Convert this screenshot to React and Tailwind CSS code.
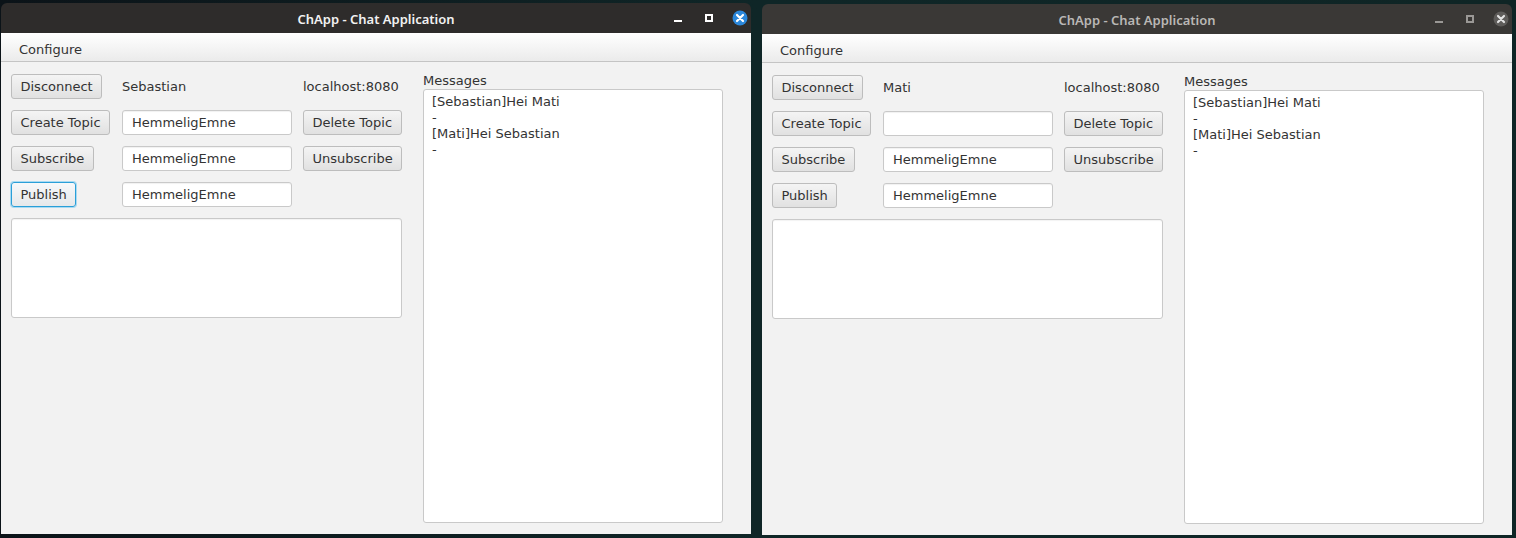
import React from "react";

const FONT = { fontFamily: '"DejaVu Sans", "Liberation Sans", sans-serif' };

function Btn({ children, focused }) {
  return (
    <div
      className={
        "h-[25px] inline-flex items-center px-[8.5px] pt-[1px] rounded-[3px] border text-[13px] text-[#333] whitespace-nowrap bg-gradient-to-b " +
        (focused
          ? "border-[#2a9fd8] from-[#f6f8fa] to-[#e6e8ea] shadow-[0_0_0_1px_#a9daf2]"
          : "border-[#bdbdbd] from-[#f4f4f4] to-[#e1e1e1]")
      }
    >
      {children}
    </div>
  );
}

function Field({ value }) {
  return (
    <div className="h-[25px] w-[170px] flex items-center pl-[9px] pt-[1px] bg-white border border-[#c9c9c9] rounded-[3px] shadow-[inset_0_1px_1px_rgba(0,0,0,0.06)] text-[13px] text-[#333]">
      {value}
    </div>
  );
}

function Controls({ active }) {
  const fg = active ? "#ffffff" : "#9a9896";
  return (
    <svg width="80" height="30" viewBox="0 0 80 30">
      <rect x="6" y="17" width="8" height="2" fill={fg} />
      <rect x="38" y="12" width="6" height="6" fill="none" stroke={fg} strokeWidth="2" />
      <circle cx="72" cy="15" r="7.5" fill={active ? "#2b87da" : "#5e5c5a"} />
      <path
        d="M69 12 L75 18 M75 12 L69 18"
        stroke={active ? "#ffffff" : "#e2e2e2"}
        strokeWidth="2.2"
        strokeLinecap="round"
      />
    </svg>
  );
}

function Window({ active, name, createValue, pos }) {
  return (
    <div
      className={"absolute w-[750px] h-[531px] flex flex-col rounded-t-[6px] overflow-hidden " + pos}
      style={FONT}
    >
      <div
        className={
          "h-[30px] grid grid-cols-[1fr_auto_1fr] items-center " +
          (active ? "bg-[#2e2c2b]" : "bg-[#3a3836]")
        }
      >
        <div />
        <div
          className={
            "text-[13px] font-semibold pt-[3px] " + (active ? "text-[#f2f2f2]" : "text-[#b9b7b5]")
          }
          style={{ fontFamily: '"Noto Sans", "DejaVu Sans", sans-serif' }}
        >
          ChApp - Chat Application
        </div>
        <div className="flex justify-end pr-[3px]">
          <Controls active={active} />
        </div>
      </div>
      <div className="h-[29px] flex items-start pl-[18px] pt-[9px] leading-[16px] bg-gradient-to-b from-[#ffffff] to-[#ebebeb] border-b border-[#c4c4c4] text-[13px] text-[#333]">
        Configure
      </div>
      <div className="flex-1 bg-[#f2f2f2] flex pl-[10px] pt-[11px] pb-[11px]">
        <div className="mt-[1px] w-[391px] grid grid-cols-[111px_181px_99px] gap-y-[11px] content-start text-[13px] text-[#333]">
          <div className="flex"><Btn>Disconnect</Btn></div>
          <div className="h-[25px] flex items-center pt-[1px]">{name}</div>
          <div className="h-[25px] flex items-center pt-[1px]">localhost:8080</div>

          <div className="flex"><Btn>Create Topic</Btn></div>
          <Field value={createValue} />
          <div className="flex"><Btn>Delete Topic</Btn></div>

          <div className="flex"><Btn>Subscribe</Btn></div>
          <Field value="HemmeligEmne" />
          <div className="flex"><Btn>Unsubscribe</Btn></div>

          <div className="flex"><Btn focused={active}>Publish</Btn></div>
          <Field value="HemmeligEmne" />
          <div />

          <div className="col-span-3 h-[100px] bg-white border border-[#c9c9c9] rounded-[3px] shadow-[inset_0_1px_1px_rgba(0,0,0,0.05)]" />
        </div>
        <div className="ml-[21px] w-[300px] flex flex-col">
          <div className="h-[16px] leading-[16px] text-[13px] text-[#333]">Messages</div>
          <div className="flex-1 bg-white border border-[#c9c9c9] rounded-[3px] pl-[8px] pt-[4px] text-[13px] leading-[16px] text-[#333]">
            <div>[Sebastian]Hei Mati</div>
            <div>-</div>
            <div>[Mati]Hei Sebastian</div>
            <div>-</div>
          </div>
        </div>
      </div>
    </div>
  );
}

export default function App() {
  return (
    <div className="relative w-[1516px] h-[538px] overflow-hidden bg-gradient-to-r from-[#0b1318] via-[#0f2627] to-[#0f2525]">
      <Window active name="Sebastian" createValue="HemmeligEmne" pos="left-[1px] top-[3px]" />
      <Window active={false} name="Mati" createValue="" pos="left-[762px] top-[4px]" />
    </div>
  );
}
